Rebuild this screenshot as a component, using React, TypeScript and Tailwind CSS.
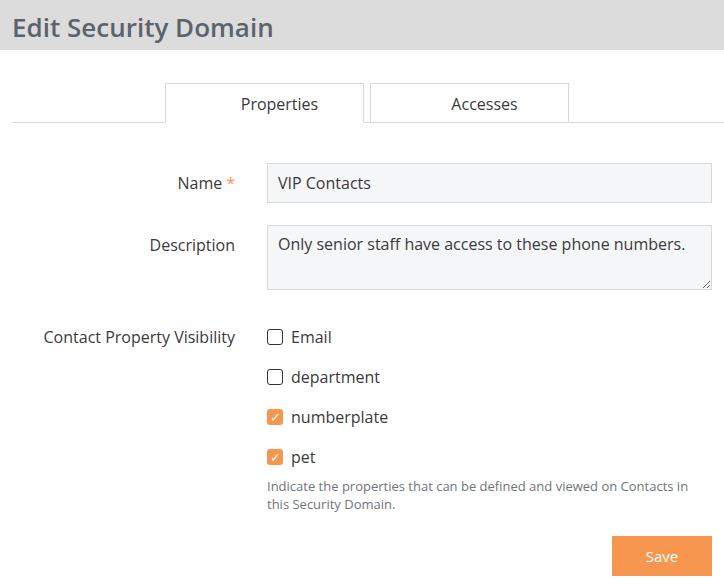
import { useState } from 'react';

const font = { fontFamily: '"Open Sans", "Noto Sans", sans-serif' };

const CheckRow = ({ label, checked, onToggle }: { label: string; checked: boolean; onToggle: () => void }) => (
  <label className="flex items-center h-10 cursor-pointer select-none">
    <span
      onClick={onToggle}
      className={
        checked
          ? 'w-4 h-4 rounded-[3px] bg-[#f7964f] flex items-center justify-center text-white text-[13px] leading-none'
          : 'w-4 h-4 rounded-[3px] border border-[#333] bg-white'
      }
    >
      {checked ? '✓' : ''}
    </span>
    <span className="ml-2 text-[16px] text-[#3a3a3a]">{label}</span>
  </label>
);

const App: React.FC = () => {
  const [tab, setTab] = useState('properties');
  const [name, setName] = useState('VIP Contacts');
  const [description, setDescription] = useState('Only senior staff have access to these phone numbers.');
  const [visible, setVisible] = useState<Record<string, boolean>>({
    Email: false,
    department: false,
    numberplate: true,
    pet: true,
  });

  const toggle = (key: string) => setVisible({ ...visible, [key]: !visible[key] });

  const tabClass = (active: boolean) =>
    active
      ? 'w-[199px] h-10 -mb-px pl-[30px] pt-[2px] bg-white border border-[#d9d9d9] border-b-white text-[16px] text-[#3a3a3a]'
      : 'w-[199px] h-10 -mb-px pl-[30px] pt-[2px] bg-white border border-[#d9d9d9] text-[16px] text-[#3a3a3a]';

  return (
    <div className="w-[724px] h-[586px] bg-white overflow-hidden" style={font}>
      <div className="h-[50px] bg-[#dcdcdc] flex items-center px-3 pt-[4px]">
        <h1 className="text-[26px] font-semibold text-[#5c636c] leading-none">Edit Security Domain</h1>
      </div>

      <div className="ml-3 pr-[2px] mt-[33px] flex justify-center gap-[6px] border-b border-[#d9d9d9]">
        <button onClick={() => setTab('properties')} className={tabClass(tab === 'properties')}>
          Properties
        </button>
        <button onClick={() => setTab('accesses')} className={tabClass(tab === 'accesses')}>
          Accesses
        </button>
      </div>

      <div className="pl-3 pr-[12px] pt-10 grid grid-cols-[223px_1fr] gap-x-8 text-[16px] text-[#3a3a3a]">
        <div className="h-10 flex items-center justify-end">
          Name<span className="ml-1 text-[#f7964f]">*</span>
        </div>
        <input
          value={name}
          onChange={(e) => setName(e.target.value)}
          className="h-10 px-[10px] bg-[#f5f6f8] border border-[#d9d9d9] outline-none text-[16px] text-[#3a3a3a]"
        />

        <div className="mt-[22px] h-10 flex items-center justify-end">Description</div>
        <textarea
          value={description}
          onChange={(e) => setDescription(e.target.value)}
          className="mt-[22px] h-[65px] px-[10px] py-[6px] bg-[#f5f6f8] border border-[#d9d9d9] outline-none text-[16px] text-[#3a3a3a] leading-[24px]"
        />

        <div className="mt-[27px] h-10 flex items-center justify-end">Contact Property Visibility</div>
        <div className="mt-[27px]">
          {Object.keys(visible).map((key) => (
            <CheckRow key={key} label={key} checked={visible[key]} onToggle={() => toggle(key)} />
          ))}
          <p className="text-[13px] leading-[18px] text-[#6f747b] pr-4">
            Indicate the properties that can be defined and viewed on Contacts in this Security Domain.
          </p>
          <div className="mt-[23px] flex justify-end">
            <button className="w-[100px] h-10 bg-[#f7964f] text-white text-[15px]">Save</button>
          </div>
        </div>
      </div>
    </div>
  );
};

export default App;
